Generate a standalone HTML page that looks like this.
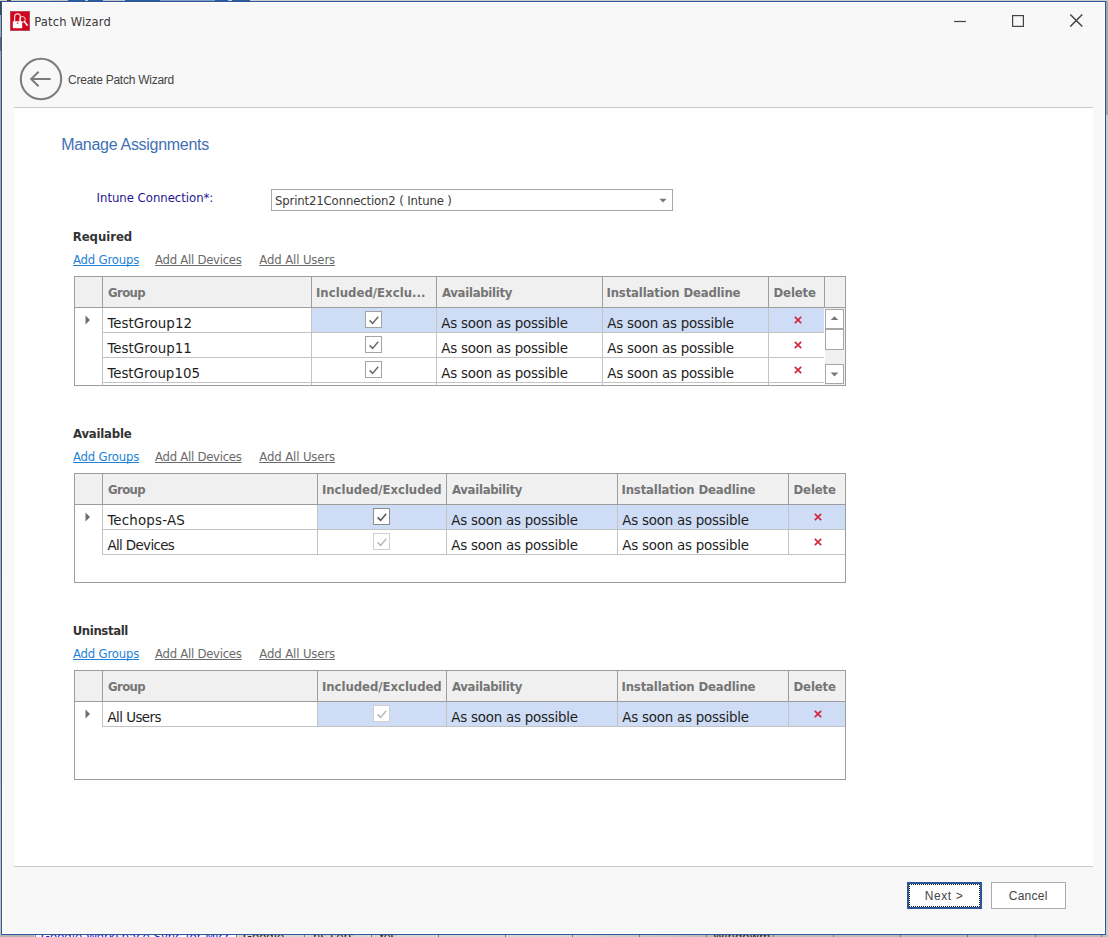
<!DOCTYPE html>
<html lang="en"><head><meta charset="utf-8"><title>Patch Wizard</title>
<style>
html,body{margin:0;padding:0}
body{width:1108px;height:937px;position:relative;overflow:hidden;background:#b9b9b9;font-family:"Liberation Sans",sans-serif}
.a{position:absolute}
.t{position:absolute;white-space:pre;line-height:normal}
.tah{font-family:"DejaVu Sans Condensed","DejaVu Sans","Liberation Sans",sans-serif;font-stretch:condensed}
.seg{font-family:"Liberation Sans",sans-serif}
.u{text-decoration:underline;text-underline-offset:1px;text-decoration-thickness:1px;text-decoration-skip-ink:none}
.grid{position:absolute;background:#fff;border:1px solid #9d9d9d;box-sizing:border-box;overflow:hidden}
.hdr{position:absolute;left:0;top:0;height:30px;background:#f0f0f0;border-bottom:1px solid #9d9d9d}
.hv{position:absolute;top:0;width:1px;height:31px;background:#9d9d9d}
.cv{position:absolute;width:1px;background:#c3c3c3}
.rl{position:absolute;height:1px;background:#c3c3c3}
.sel{position:absolute;background:#cedcf5;height:24px}
.cb{position:absolute;width:15px;height:15px;border:1px solid #a3a3a3;background:#fff}
.cb.dis{border-color:#d0d0d0}
.cb.str{border-color:#8c8c8c}
svg{position:absolute;overflow:visible}
</style></head><body>
<div class="a" style="left:0;top:0;width:1108px;height:1px;background:linear-gradient(90deg,#cfccc5 0 7px,#4a463c 7px 11px,#cfccc5 11px 52px,#c4c4c4 52px 68px,#2a5b9c 68px 85px,#c4c4c4 85px 88px,#2a5b9c 88px 103px,#c4c4c4 103px 125px,#2a5b9c 125px 160px,#7f9cc4 160px 215px,#2a5b9c 215px 228px,#c4c4c4 228px 232px,#2a5b9c 232px 250px,#cfcfcf 250px)"></div>
<div class="a" style="left:0;top:1px;width:1px;height:936px;background:linear-gradient(180deg,#4a463c 0 14px,#aaa69f 13px 36px,#6d6657 36px 50px,#a8a49c 50px 400px,#c6c2ba 900px)"></div>
<div class="a" style="left:1106px;top:1px;width:2px;height:936px;background:linear-gradient(180deg,#a5a5a5 0 114px,#cdcdcd 114px)"></div>
<div class="a tah" style="left:0;top:935px;width:1108px;height:2px;background:linear-gradient(90deg,#d8d8d8 0 560px,#bebebe 700px);overflow:hidden;font-size:13px;line-height:normal;white-space:pre"><div class="a" style="left:0;top:0;width:34px;height:3px;background:#b4b4b4"></div><div class="a" style="left:36px;top:0;width:200px;height:3px;background:#fdfdfd"></div><div class="a" style="left:35px;top:0;width:1px;height:3px;background:#7c7c7c"></div><div class="a" style="left:236px;top:0;width:1px;height:3px;background:#7c7c7c"></div><div class="a" style="left:304px;top:0;width:1px;height:3px;background:#7c7c7c"></div><div class="a" style="left:371px;top:0;width:1px;height:3px;background:#7c7c7c"></div><div class="a" style="left:438px;top:0;width:1px;height:3px;background:#7c7c7c"></div><div class="a" style="left:505px;top:0;width:1px;height:3px;background:#7c7c7c"></div><div class="a" style="left:572px;top:0;width:1px;height:3px;background:#7c7c7c"></div><div class="a" style="left:639px;top:0;width:1px;height:3px;background:#7c7c7c"></div><div class="a" style="left:706px;top:0;width:1px;height:3px;background:#7c7c7c"></div><div class="a" style="left:773px;top:0;width:1px;height:3px;background:#7c7c7c"></div><div class="a" style="left:833px;top:0;width:1px;height:3px;background:#7c7c7c"></div><div class="a" style="left:900px;top:0;width:1px;height:3px;background:#7c7c7c"></div><div class="a" style="left:967px;top:0;width:1px;height:3px;background:#7c7c7c"></div><div class="a" style="left:1035px;top:0;width:1px;height:3px;background:#7c7c7c"></div><div class="a" style="left:1101px;top:0;width:1px;height:3px;background:#7c7c7c"></div><span class="a" style="left:41px;top:-6px;color:#1a1ad0">Google Workspace Sync for Micr</span><span class="a" style="left:243px;top:-6px;color:#222">Google</span><span class="a" style="left:313px;top:-6px;color:#222">ns.sers</span><span class="a" style="left:378px;top:-6px;color:#222">Yes</span><span class="a" style="left:713px;top:-6px;color:#222">Windowm</span></div>
<div class="a" style="left:1px;top:1px;width:1103px;height:932px;border:1px solid #2b579a;background:#f8f8f8;box-shadow:inset 0 0 0 1px #fff"></div>
<svg style="left:10px;top:11px" width="20" height="20" viewBox="0 0 20 20">
<rect x="0" y="0" width="20" height="20" fill="#b6596a"/>
<rect x="0.8" y="0.8" width="18.4" height="18.4" fill="#d0061f"/>
<path d="M4.6 10.6 V6.2 A2.9 3.4 0 0 1 10.4 6.2 V10.6" fill="none" stroke="#fff" stroke-width="1.25" stroke-opacity=".85"/>
<circle cx="12.4" cy="8.4" r="2.9" fill="none" stroke="#fff" stroke-width="1" stroke-opacity=".85"/>
<path d="M14.5 10.8 L17.2 14.2" stroke="#fff" stroke-width="1.5" stroke-linecap="round"/>
<rect x="2.8" y="10.2" width="9.4" height="7" rx=".6" fill="#fff"/>
<circle cx="7.6" cy="12.2" r=".9" fill="#e0566a"/>
</svg>
<svg style="left:940px;top:2px" width="160" height="40" viewBox="940 2 160 40">
<path d="M954 21.5 H966" stroke="#444" stroke-width="1.2"/>
<rect x="1012.6" y="15.6" width="10.8" height="10.8" fill="none" stroke="#444" stroke-width="1.2"/>
<path d="M1070.3 14.5 L1082.3 26.5 M1082.3 14.5 L1070.3 26.5" stroke="#444" stroke-width="1.5"/>
</svg>
<svg style="left:18px;top:56px" width="46" height="46" viewBox="18 56 46 46">
<circle cx="41" cy="79" r="20.2" fill="none" stroke="#7d7b79" stroke-width="2"/>
<path d="M50.6 79 H31.2 M38.6 71.8 L31.2 79 L38.6 86.2" fill="none" stroke="#7d7b79" stroke-width="2"/>
</svg>
<div class="a" style="left:14px;top:107px;width:1079px;height:760px;background:#fff;border-top:1px solid #cacaca;border-bottom:1px solid #cacaca;box-sizing:border-box"></div>
<div class="a" style="left:271px;top:189px;width:402px;height:22px;box-sizing:border-box;border:1px solid #a9a9a9;background:#fff"></div>
<svg style="left:659px;top:198px" width="8" height="5" viewBox="0 0 8 5"><path d="M0.4 0.8 H7.6 L4 4.6 Z" fill="#777"/></svg>
<div class="a" style="left:907px;top:882px;width:75px;height:27px;box-sizing:border-box;border:1px solid #2b579a;background:#fff;box-shadow:inset 0 0 0 1px #2b579a"></div>
<div class="a" style="left:909px;top:884px;width:71px;height:23px;box-sizing:border-box;border:1px dotted #222"></div>
<div class="a" style="left:991px;top:882px;width:75px;height:27px;box-sizing:border-box;border:1px solid #ababab;background:#fff"></div>
<div class="grid" style="left:74px;top:276px;width:772px;height:110px"><div class="hdr" style="width:770px"></div><div class="hv" style="left:27px"></div><div class="hv" style="left:236px"></div><div class="hv" style="left:361px"></div><div class="hv" style="left:527px"></div><div class="hv" style="left:693px"></div><div class="hv" style="left:749px"></div><div class="sel" style="left:237px;top:31px;width:512px"></div><div class="cv" style="left:27px;top:31px;height:77px"></div><div class="cv" style="left:236px;top:31px;height:77px"></div><div class="cv" style="left:361px;top:31px;height:77px"></div><div class="cv" style="left:527px;top:31px;height:77px"></div><div class="cv" style="left:693px;top:31px;height:77px"></div><div class="rl" style="left:28px;top:55px;width:721px"></div><div class="rl" style="left:28px;top:80px;width:721px"></div><div class="rl" style="left:28px;top:105px;width:721px"></div><div class="rl" style="left:28px;top:130px;width:721px"></div><svg style="left:10px;top:37px" width="6" height="12" viewBox="0 0 6 12"><path d="M0.5 1.4 L5 6 L0.5 10.6 Z" fill="#6e6e6e"/></svg><div class="cb" style="left:290px;top:34px"></div><svg style="left:290px;top:34px" width="17" height="17" viewBox="0 0 17 17"><path d="M4.6 9.4 L7.6 12.4 L13.2 5.8" fill="none" stroke="#6b6b6b" stroke-width="1.5"/></svg><svg style="left:718px;top:38px" width="10" height="10" viewBox="-5 -5 10 10"><path d="M-3.2 -3.1 L3.2 3.1 M3.2 -3.1 L-3.2 3.1" stroke="#d3253d" stroke-width="1.65"/></svg><div class="cb" style="left:290px;top:59px"></div><svg style="left:290px;top:59px" width="17" height="17" viewBox="0 0 17 17"><path d="M4.6 9.4 L7.6 12.4 L13.2 5.8" fill="none" stroke="#6b6b6b" stroke-width="1.5"/></svg><svg style="left:718px;top:63px" width="10" height="10" viewBox="-5 -5 10 10"><path d="M-3.2 -3.1 L3.2 3.1 M3.2 -3.1 L-3.2 3.1" stroke="#d3253d" stroke-width="1.65"/></svg><div class="cb" style="left:290px;top:84px"></div><svg style="left:290px;top:84px" width="17" height="17" viewBox="0 0 17 17"><path d="M4.6 9.4 L7.6 12.4 L13.2 5.8" fill="none" stroke="#6b6b6b" stroke-width="1.5"/></svg><svg style="left:718px;top:88px" width="10" height="10" viewBox="-5 -5 10 10"><path d="M-3.2 -3.1 L3.2 3.1 M3.2 -3.1 L-3.2 3.1" stroke="#d3253d" stroke-width="1.65"/></svg><div class="cb" style="left:290px;top:109px"></div><svg style="left:290px;top:109px" width="17" height="17" viewBox="0 0 17 17"><path d="M4.6 9.4 L7.6 12.4 L13.2 5.8" fill="none" stroke="#6b6b6b" stroke-width="1.5"/></svg><svg style="left:718px;top:113px" width="10" height="10" viewBox="-5 -5 10 10"><path d="M-3.2 -3.1 L3.2 3.1 M3.2 -3.1 L-3.2 3.1" stroke="#d3253d" stroke-width="1.65"/></svg><div class="a" style="left:750px;top:31px;width:21px;height:77px;background:#f0f0f0"></div><div class="a" style="left:750px;top:32px;width:19px;height:20px;box-sizing:border-box;border:1px solid #a7a7a7;background:#fff"></div><div class="a" style="left:750px;top:52px;width:19px;height:21px;box-sizing:border-box;border:1px solid #a7a7a7;background:#fff"></div><div class="a" style="left:750px;top:87px;width:19px;height:20px;box-sizing:border-box;border:1px solid #a7a7a7;background:#fff"></div><svg style="left:755px;top:39px" width="9" height="4" viewBox="0 0 9 4"><path d="M0.7 4 H8.3 L4.5 0.2 Z" fill="#777"/></svg><svg style="left:755px;top:95px" width="9" height="5" viewBox="0 0 9 5"><path d="M0.7 0.4 H8.3 L4.5 4.4 Z" fill="#777"/></svg></div>
<div class="grid" style="left:74px;top:473px;width:772px;height:110px"><div class="hdr" style="width:770px"></div><div class="hv" style="left:27px"></div><div class="hv" style="left:242px"></div><div class="hv" style="left:371px"></div><div class="hv" style="left:542px"></div><div class="hv" style="left:713px"></div><div class="sel" style="left:243px;top:31px;width:527px"></div><div class="cv" style="left:27px;top:31px;height:50px"></div><div class="cv" style="left:242px;top:31px;height:50px"></div><div class="cv" style="left:371px;top:31px;height:50px"></div><div class="cv" style="left:542px;top:31px;height:50px"></div><div class="cv" style="left:713px;top:31px;height:50px"></div><div class="rl" style="left:28px;top:55px;width:742px"></div><div class="rl" style="left:28px;top:80px;width:742px"></div><svg style="left:10px;top:37px" width="6" height="12" viewBox="0 0 6 12"><path d="M0.5 1.4 L5 6 L0.5 10.6 Z" fill="#6e6e6e"/></svg><div class="cb str" style="left:298px;top:34px"></div><svg style="left:298px;top:34px" width="17" height="17" viewBox="0 0 17 17"><path d="M4.6 9.4 L7.6 12.4 L13.2 5.8" fill="none" stroke="#555" stroke-width="1.5"/></svg><svg style="left:738px;top:38px" width="10" height="10" viewBox="-5 -5 10 10"><path d="M-3.2 -3.1 L3.2 3.1 M3.2 -3.1 L-3.2 3.1" stroke="#d3253d" stroke-width="1.65"/></svg><div class="cb dis" style="left:298px;top:59px"></div><svg style="left:298px;top:59px" width="17" height="17" viewBox="0 0 17 17"><path d="M4.6 9.4 L7.6 12.4 L13.2 5.8" fill="none" stroke="#b9b9b9" stroke-width="1.5"/></svg><svg style="left:738px;top:63px" width="10" height="10" viewBox="-5 -5 10 10"><path d="M-3.2 -3.1 L3.2 3.1 M3.2 -3.1 L-3.2 3.1" stroke="#d3253d" stroke-width="1.65"/></svg></div>
<div class="grid" style="left:74px;top:670px;width:772px;height:110px"><div class="hdr" style="width:770px"></div><div class="hv" style="left:27px"></div><div class="hv" style="left:242px"></div><div class="hv" style="left:371px"></div><div class="hv" style="left:542px"></div><div class="hv" style="left:713px"></div><div class="sel" style="left:243px;top:31px;width:527px"></div><div class="cv" style="left:27px;top:31px;height:25px"></div><div class="cv" style="left:242px;top:31px;height:25px"></div><div class="cv" style="left:371px;top:31px;height:25px"></div><div class="cv" style="left:542px;top:31px;height:25px"></div><div class="cv" style="left:713px;top:31px;height:25px"></div><div class="rl" style="left:28px;top:55px;width:742px"></div><svg style="left:10px;top:37px" width="6" height="12" viewBox="0 0 6 12"><path d="M0.5 1.4 L5 6 L0.5 10.6 Z" fill="#6e6e6e"/></svg><div class="cb dis" style="left:298px;top:34px"></div><svg style="left:298px;top:34px" width="17" height="17" viewBox="0 0 17 17"><path d="M4.6 9.4 L7.6 12.4 L13.2 5.8" fill="none" stroke="#b9b9b9" stroke-width="1.5"/></svg><svg style="left:738px;top:38px" width="10" height="10" viewBox="-5 -5 10 10"><path d="M-3.2 -3.1 L3.2 3.1 M3.2 -3.1 L-3.2 3.1" stroke="#d3253d" stroke-width="1.65"/></svg></div>
<div class="t tah" style="left:34.3px;top:14px;font-size:12.8px;color:#3a3a3a;letter-spacing:0.187px">Patch Wizard</div>
<div class="t seg" style="left:68.1px;top:73px;font-size:12px;color:#444;letter-spacing:-0.255px">Create Patch Wizard</div>
<div class="t seg" style="left:61.2px;top:136px;font-size:16px;color:#4270b5;letter-spacing:-0.294px">Manage Assignments</div>
<div class="t tah" style="left:96.6px;top:190px;font-size:13px;color:#1d1690;letter-spacing:-0.025px">Intune Connection*:</div>
<div class="t tah" style="left:275.0px;top:193px;font-size:13px;color:#3a3a3a;letter-spacing:-0.148px">Sprint21Connection2 ( Intune )</div>
<div class="t seg" style="left:924.7px;top:889px;font-size:12px;color:#444;letter-spacing:0.61px">Next &gt;</div>
<div class="t seg" style="left:1008.8px;top:889px;font-size:12px;color:#444;letter-spacing:0.23px">Cancel</div>
<div class="t tah" style="left:72.7px;top:229px;font-size:13px;color:#333;letter-spacing:-0.035px;font-weight:bold">Required</div>
<div class="t tah u" style="left:73.0px;top:252px;font-size:13px;color:#1e82d8;letter-spacing:-0.18px">Add Groups</div>
<div class="t tah u" style="left:155.0px;top:252px;font-size:13px;color:#6a6a6a;letter-spacing:-0.268px">Add All Devices</div>
<div class="t tah u" style="left:259.25px;top:252px;font-size:13px;color:#6a6a6a;letter-spacing:-0.114px">Add All Users</div>
<div class="t tah" style="left:73.0px;top:426px;font-size:13px;color:#333;letter-spacing:-0.2px;font-weight:bold">Available</div>
<div class="t tah u" style="left:73.0px;top:449px;font-size:13px;color:#1e82d8;letter-spacing:-0.18px">Add Groups</div>
<div class="t tah u" style="left:155.0px;top:449px;font-size:13px;color:#6a6a6a;letter-spacing:-0.268px">Add All Devices</div>
<div class="t tah u" style="left:259.25px;top:449px;font-size:13px;color:#6a6a6a;letter-spacing:-0.114px">Add All Users</div>
<div class="t tah" style="left:72.7px;top:623px;font-size:13px;color:#333;letter-spacing:-0.375px;font-weight:bold">Uninstall</div>
<div class="t tah u" style="left:73.0px;top:646px;font-size:13px;color:#1e82d8;letter-spacing:-0.18px">Add Groups</div>
<div class="t tah u" style="left:155.0px;top:646px;font-size:13px;color:#6a6a6a;letter-spacing:-0.268px">Add All Devices</div>
<div class="t tah u" style="left:259.25px;top:646px;font-size:13px;color:#6a6a6a;letter-spacing:-0.114px">Add All Users</div>
<div class="t tah" style="left:108.0px;top:285px;font-size:13px;color:#757575;letter-spacing:-0.593px;font-weight:bold">Group</div>
<div class="t tah" style="left:316.0px;top:285px;font-size:13px;color:#757575;letter-spacing:0.024px;font-weight:bold">Included/Exclu...</div>
<div class="t tah" style="left:442.0px;top:285px;font-size:13px;color:#757575;letter-spacing:-0.295px;font-weight:bold">Availability</div>
<div class="t tah" style="left:606.5px;top:285px;font-size:13px;color:#757575;letter-spacing:-0.162px;font-weight:bold">Installation Deadline</div>
<div class="t tah" style="left:773.5px;top:285px;font-size:13px;color:#757575;letter-spacing:-0.125px;font-weight:bold">Delete</div>
<div class="t tah" style="left:108.0px;top:482px;font-size:13px;color:#757575;letter-spacing:-0.593px;font-weight:bold">Group</div>
<div class="t tah" style="left:322.0px;top:482px;font-size:13px;color:#757575;letter-spacing:-0.039px;font-weight:bold">Included/Excluded</div>
<div class="t tah" style="left:452.0px;top:482px;font-size:13px;color:#757575;letter-spacing:-0.295px;font-weight:bold">Availability</div>
<div class="t tah" style="left:621.5px;top:482px;font-size:13px;color:#757575;letter-spacing:-0.162px;font-weight:bold">Installation Deadline</div>
<div class="t tah" style="left:793.5px;top:482px;font-size:13px;color:#757575;letter-spacing:-0.125px;font-weight:bold">Delete</div>
<div class="t tah" style="left:108.0px;top:679px;font-size:13px;color:#757575;letter-spacing:-0.593px;font-weight:bold">Group</div>
<div class="t tah" style="left:322.0px;top:679px;font-size:13px;color:#757575;letter-spacing:-0.039px;font-weight:bold">Included/Excluded</div>
<div class="t tah" style="left:452.0px;top:679px;font-size:13px;color:#757575;letter-spacing:-0.295px;font-weight:bold">Availability</div>
<div class="t tah" style="left:621.5px;top:679px;font-size:13px;color:#757575;letter-spacing:-0.162px;font-weight:bold">Installation Deadline</div>
<div class="t tah" style="left:793.5px;top:679px;font-size:13px;color:#757575;letter-spacing:-0.125px;font-weight:bold">Delete</div>
<div class="t tah" style="left:107.5px;top:314px;font-size:14.9px;color:#1e1e1e;letter-spacing:0.062px">TestGroup12</div>
<div class="t tah" style="left:441.25px;top:314px;font-size:14.9px;color:#1e1e1e;letter-spacing:-0.229px">As soon as possible</div>
<div class="t tah" style="left:607.25px;top:314px;font-size:14.9px;color:#1e1e1e;letter-spacing:-0.229px">As soon as possible</div>
<div class="t tah" style="left:107.5px;top:339px;font-size:14.9px;color:#1e1e1e;letter-spacing:0.038px">TestGroup11</div>
<div class="t tah" style="left:441.25px;top:339px;font-size:14.9px;color:#1e1e1e;letter-spacing:-0.229px">As soon as possible</div>
<div class="t tah" style="left:607.25px;top:339px;font-size:14.9px;color:#1e1e1e;letter-spacing:-0.229px">As soon as possible</div>
<div class="t tah" style="left:107.5px;top:364px;font-size:14.9px;color:#1e1e1e;letter-spacing:0.0px">TestGroup105</div>
<div class="t tah" style="left:441.25px;top:364px;font-size:14.9px;color:#1e1e1e;letter-spacing:-0.229px">As soon as possible</div>
<div class="t tah" style="left:607.25px;top:364px;font-size:14.9px;color:#1e1e1e;letter-spacing:-0.229px">As soon as possible</div>
<div class="t tah" style="left:107.5px;top:511px;font-size:14.9px;color:#1e1e1e;letter-spacing:0.18px">Techops-AS</div>
<div class="t tah" style="left:451.25px;top:511px;font-size:14.9px;color:#1e1e1e;letter-spacing:-0.229px">As soon as possible</div>
<div class="t tah" style="left:622.25px;top:511px;font-size:14.9px;color:#1e1e1e;letter-spacing:-0.229px">As soon as possible</div>
<div class="t tah" style="left:107.5px;top:536px;font-size:14.9px;color:#1e1e1e;letter-spacing:-0.637px">All Devices</div>
<div class="t tah" style="left:451.25px;top:536px;font-size:14.9px;color:#1e1e1e;letter-spacing:-0.229px">As soon as possible</div>
<div class="t tah" style="left:622.25px;top:536px;font-size:14.9px;color:#1e1e1e;letter-spacing:-0.229px">As soon as possible</div>
<div class="t tah" style="left:107.5px;top:708px;font-size:14.9px;color:#1e1e1e;letter-spacing:-0.547px">All Users</div>
<div class="t tah" style="left:451.25px;top:708px;font-size:14.9px;color:#1e1e1e;letter-spacing:-0.229px">As soon as possible</div>
<div class="t tah" style="left:622.25px;top:708px;font-size:14.9px;color:#1e1e1e;letter-spacing:-0.229px">As soon as possible</div>
</body></html>
